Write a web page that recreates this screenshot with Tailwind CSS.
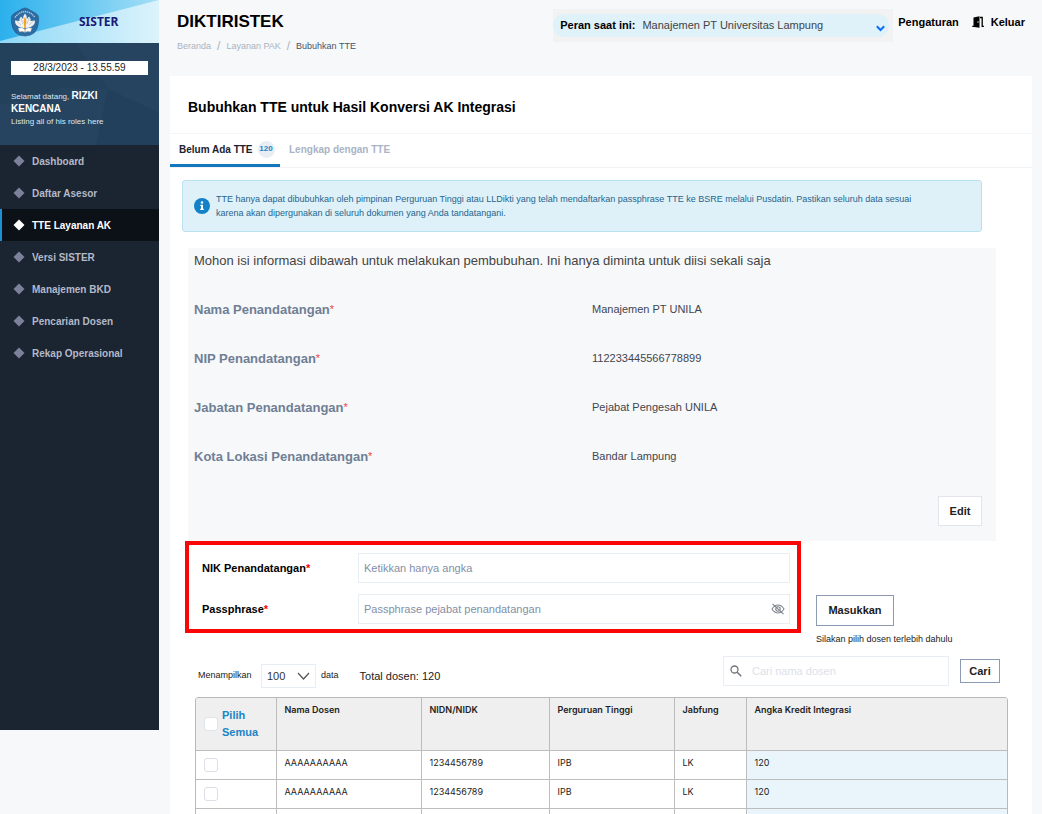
<!DOCTYPE html>
<html lang="id">
<head>
<meta charset="utf-8">
<title>SISTER - Bubuhkan TTE</title>
<script src="https://cdn.jsdelivr.net/npm/@tailwindcss/browser@4"></script>
</head>
<body class="bg-[#f7f8fa] font-['Liberation_Sans',Arial,sans-serif] text-black">
<div class="flex h-screen items-start overflow-hidden">

  <aside class="flex min-h-[730px] w-[159px] shrink-0 flex-col bg-[#1b2431]">
    <div class="relative flex h-[43px] items-center overflow-hidden bg-[#c4ebfa]">
      <svg class="absolute inset-0 h-full w-full" viewBox="0 0 159 43" preserveAspectRatio="none" aria-hidden="true">
        <defs>
          <linearGradient id="sky" x1="0" y1="0" x2="1" y2="0"><stop offset="0" stop-color="#2bb0ec"/><stop offset="1" stop-color="#a5dff7"/></linearGradient>
          <linearGradient id="haze" x1="0" y1="0" x2="1" y2="0"><stop offset="0" stop-color="#8ed8f6"/><stop offset="1" stop-color="#dcf3fc"/></linearGradient>
        </defs>
        <rect width="159" height="43" fill="url(#haze)"/>
        <path d="M0 0H159L0 41Z" fill="url(#sky)"/>
      </svg>
      <svg class="relative ml-[10px] h-[30px] w-[30px]" viewBox="0 0 30 30" role="img" aria-label="Tut Wuri Handayani">
        <path d="M15 1Q17 1 19 2.5L26 6.500Q28.500 8 28.600 10.500L28.500 15Q28 22 24 26Q20 29 15 29Q10 29 6 26Q2 22 1.500 15L1.400 10.500Q1.500 8 4 6.500L11 2.500Q13 1 15 1Z" fill="#2d6da3" stroke="#1f5486" stroke-width=".6"/>
        <path d="M5 10.500Q9 5 15 4.500Q21 5 25 10.500" fill="none" stroke="#b9d3e6" stroke-width="1.300" stroke-dasharray="1.300 .7"/>
        <path d="M15 6.500Q17.500 9 16.800 12L19 9.500Q21 11.500 20.500 14L25 13.500Q25 18 21.500 19.500L18.500 21H11.500L8.500 19.500Q5 18 5 13.500L9.500 14Q9 11.500 11 9.500L13.200 12Q12.500 9 15 6.500Z" fill="#f3f1ee"/>
        <path d="M7 14.500L11 18M23 14.500L19 18M11 11L13 17M19 11L17 17" stroke="#9db7cb" stroke-width=".6"/>
        <path d="M15 10Q17 13 16 17.500L15.800 21H14.200L14 17.500Q13 13 15 10Z" fill="#f2a52a"/>
        <path d="M8 21Q12 20 15 22Q18 20 22 21L20.500 25Q17.500 24 15 25.500Q12.500 24 9.500 25Z" fill="#fff" stroke="#6a8aa5" stroke-width=".5"/>
        <path d="M15 22V25.500" stroke="#b57738" stroke-width=".8"/>
      </svg>
      <div class="relative ml-[39px] font-['Noto_Sans',sans-serif] text-xs font-bold text-[#1a1a78]">SISTER</div>
    </div>

    <div class="relative h-[102px] overflow-hidden bg-[#24415c] px-[11px] pt-[18px] text-white">
      <svg class="absolute inset-0 h-full w-full" viewBox="0 0 159 102" preserveAspectRatio="none" aria-hidden="true">
        <path d="M76 0H159V70L108 46Z" fill="#284662" opacity=".6"/>
        <path d="M0 62L60 45L108 46L96 102H0Z" fill="#284762" opacity=".5"/>
        <path d="M108 46L159 70V102H96Z" fill="#223f5a" opacity=".6"/>
      </svg>
      <div class="relative">
        <time class="block h-[14px] bg-white text-center text-[10px] leading-[14px] text-[#222]">28/3/2023 - 13.55.59</time>
        <p class="mt-[15px] text-[8px] leading-[12px] text-[#dfe6ec]">Selamat datang, <b class="text-[10px] text-white">RIZKI KENCANA</b></p>
        <p class="text-[8px] leading-[11px] text-[#dfe6ec]">Listing all of his roles here</p>
      </div>
    </div>

    <nav class="flex flex-col text-[10px] font-bold text-[#b3b9c8]">
      <a href="#" class="flex h-8 items-center gap-[7px] border-l-2 border-transparent pl-[11px]"><svg class="h-3 w-3 fill-[#7d8199]" viewBox="0 0 12 12" aria-hidden="true"><path d="M6 .5L11.500 6L6 11.500L.5 6Z"/></svg>Dashboard</a>
      <a href="#" class="flex h-8 items-center gap-[7px] border-l-2 border-transparent pl-[11px]"><svg class="h-3 w-3 fill-[#7d8199]" viewBox="0 0 12 12" aria-hidden="true"><path d="M6 .5L11.500 6L6 11.500L.5 6Z"/></svg>Daftar Asesor</a>
      <a href="#" class="flex h-8 items-center gap-[7px] border-l-2 border-[#1c8fd6] bg-[#0c1017] pl-[11px] text-white"><svg class="h-3 w-3 fill-white" viewBox="0 0 12 12" aria-hidden="true"><path d="M6 .5L11.500 6L6 11.500L.5 6Z"/></svg>TTE Layanan AK</a>
      <a href="#" class="flex h-8 items-center gap-[7px] border-l-2 border-transparent pl-[11px]"><svg class="h-3 w-3 fill-[#7d8199]" viewBox="0 0 12 12" aria-hidden="true"><path d="M6 .5L11.500 6L6 11.500L.5 6Z"/></svg>Versi SISTER</a>
      <a href="#" class="flex h-8 items-center gap-[7px] border-l-2 border-transparent pl-[11px]"><svg class="h-3 w-3 fill-[#7d8199]" viewBox="0 0 12 12" aria-hidden="true"><path d="M6 .5L11.500 6L6 11.500L.5 6Z"/></svg>Manajemen BKD</a>
      <a href="#" class="flex h-8 items-center gap-[7px] border-l-2 border-transparent pl-[11px]"><svg class="h-3 w-3 fill-[#7d8199]" viewBox="0 0 12 12" aria-hidden="true"><path d="M6 .5L11.500 6L6 11.500L.5 6Z"/></svg>Pencarian Dosen</a>
      <a href="#" class="flex h-8 items-center gap-[7px] border-l-2 border-transparent pl-[11px]"><svg class="h-3 w-3 fill-[#7d8199]" viewBox="0 0 12 12" aria-hidden="true"><path d="M6 .5L11.500 6L6 11.500L.5 6Z"/></svg>Rekap Operasional</a>
    </nav>
  </aside>

  <main class="min-w-0 flex-1 pr-[10px] pl-[11px]">
    <header class="flex h-[76px] items-start pr-[7px] pl-[7px]">
      <div class="flex-1 pt-3">
        <div class="text-[17px] leading-5 font-bold">DIKTIRISTEK</div>
        <nav aria-label="Breadcrumb" class="mt-2 flex items-center gap-[6px] text-[9px] leading-3 text-[#a9b3c2]">
          <a href="#">Beranda</a><span class="text-xs leading-3">/</span><a href="#">Layanan PAK</a><span class="text-xs leading-3">/</span><a href="#" class="text-[#44546a]">Bubuhkan TTE</a>
        </nav>
      </div>
      <div class="mt-[9px] w-[340px] bg-[#f2f2f2] pt-[5px] pr-1 pb-[5px]">
        <div class="relative flex h-[23px] items-center rounded-full bg-[#dff1f9] pl-[7px]">
          <label for="peran" class="shrink-0 text-[11px] font-bold">Peran saat ini:</label>
          <select id="peran" class="ml-[7px] h-full flex-1 appearance-none bg-transparent text-[11px] text-[#444]"><option>Manajemen PT Universitas Lampung</option></select>
          <svg class="pointer-events-none absolute top-[11px] right-1 h-[7px] w-[9px]" viewBox="0 0 9 7" aria-hidden="true"><path d="M.8 1.200L4.500 5L8.200 1.200" fill="none" stroke="#0d6efd" stroke-width="2"/></svg>
        </div>
      </div>
      <a href="#" class="mt-[15px] ml-[5px] text-[11px] leading-[14px] font-bold">Pengaturan</a>
      <a href="#" class="mt-[15px] ml-[13px] flex items-center gap-[7px] text-[11px] leading-[14px] font-bold">
        <svg class="h-3 w-3" viewBox="0 0 12 12" aria-hidden="true"><path d="M1.500 1.500L7.500 .3V11.700L2 11H.3V9.800H1.500Z"/><path d="M8 1.500H10.200V10.300H11.900" fill="none" stroke="#000" stroke-width="1.300"/><circle cx="6" cy="6" r=".7" fill="#fff"/></svg>
        Keluar
      </a>
    </header>

    <section class="bg-white">
      <h1 class="flex h-[58px] items-center border-b border-[#f3f5f8] pt-1 pl-[18px] text-sm font-bold">Bubuhkan TTE untuk Hasil Konversi AK Integrasi</h1>
      <div class="flex h-[34px] items-stretch border-b border-[#f0f2f5] text-[10px] font-bold" role="tablist">
        <button role="tab" aria-selected="true" class="flex w-[110px] items-center border-b-3 border-[#1277bd] pl-[9px] text-[#1a2230]">Belum Ada TTE<span class="ml-[5px] flex h-[17px] w-[17px] items-center justify-center rounded-full bg-[#e9eef5] text-[8px] text-[#1c84c6]">120</span></button>
        <button role="tab" aria-selected="false" class="pb-[3px] pl-[9px] text-[#a9b3c5]">Lengkap dengan TTE</button>
      </div>

      <div class="mt-3 mr-[50px] ml-3 flex h-[52px] items-center gap-[6px] rounded-[3px] border border-[#b9e1f0] bg-[#dff1f8] pr-9 pl-[11px] text-[#25658f]">
        <svg class="h-4 w-4 shrink-0" viewBox="0 0 16 16" aria-hidden="true"><circle cx="8" cy="8" r="8" fill="#1381c7"/><circle cx="8" cy="4.500" r="1.200" fill="#fff"/><path d="M6.300 6.800H9V10.800H9.800V12H6.200V10.800H7V8H6.300Z" fill="#fff"/></svg>
        <p class="text-[9px] leading-[14px]">TTE hanya dapat dibubuhkan oleh pimpinan Perguruan Tinggi atau LLDikti yang telah mendaftarkan passphrase TTE ke BSRE melalui Pusdatin. Pastikan seluruh data sesuai<br>karena akan dipergunakan di seluruh dokumen yang Anda tandatangani.</p>
      </div>

      <div class="mt-4 mr-9 ml-[18px] bg-[#f7f8fa] px-[6px] pt-1 pb-[15px]">
        <p class="text-[13px] leading-[17px] text-[#444]">Mohon isi informasi dibawah untuk melakukan pembubuhan. Ini hanya diminta untuk diisi sekali saja</p>
        <dl class="mt-4 grid grid-cols-2 text-[#3f4650] *:flex *:h-[49px] *:items-center">
          <dt class="text-[13px] font-bold text-[#6f7f95]">Nama Penandatangan<span class="text-[11px] font-normal text-[#ee4444]">*</span></dt><dd class="text-[11px]">Manajemen PT UNILA</dd>
          <dt class="text-[13px] font-bold text-[#6f7f95]">NIP Penandatangan<span class="text-[11px] font-normal text-[#ee4444]">*</span></dt><dd class="text-[11px]">112233445566778899</dd>
          <dt class="text-[13px] font-bold text-[#6f7f95]">Jabatan Penandatangan<span class="text-[11px] font-normal text-[#ee4444]">*</span></dt><dd class="text-[11px]">Pejabat Pengesah UNILA</dd>
          <dt class="text-[13px] font-bold text-[#6f7f95]">Kota Lokasi Penandatangan<span class="text-[11px] font-normal text-[#ee4444]">*</span></dt><dd class="text-[11px]">Bandar Lampung</dd>
        </dl>
        <div class="mt-[15px] flex justify-end pr-2"><button class="h-[30px] w-11 border border-[#e2e6ec] bg-white text-[11px] font-bold text-[#222]">Edit</button></div>
      </div>

      <form class="ml-[15px] flex items-start gap-[15px]">
        <div class="flex flex-1 flex-col gap-[11px] border-4 border-[#f90606] pt-2 pr-[7px] pb-[5px] pl-[13px]">
          <div class="flex items-center">
            <label for="nik" class="w-[156px] text-[11px] font-bold">NIK Penandatangan<span class="text-[#f00]">*</span></label>
            <input id="nik" type="text" placeholder="Ketikkan hanya angka" class="h-[30px] min-w-0 flex-1 border border-[#e9eef5] px-[5px] text-[11px] placeholder:text-[#8290a8]">
          </div>
          <div class="flex items-center">
            <label for="pass" class="w-[156px] text-[11px] font-bold">Passphrase<span class="text-[#f00]">*</span></label>
            <div class="relative flex flex-1">
              <input id="pass" type="password" placeholder="Passphrase pejabat penandatangan" class="h-[30px] min-w-0 flex-1 border border-[#e9eef5] px-[5px] text-[11px] placeholder:text-[#8290a8]">
              <button type="button" aria-label="Tampilkan passphrase" class="absolute top-[9px] right-[5px]"><svg class="h-3 w-[14px]" viewBox="0 0 14 12" fill="none" stroke="#7d828b" stroke-width="1.100"><path d="M1 6Q3.500 2 7 2Q10.500 2 13 6Q10.500 10 7 10Q3.500 10 1 6Z"/><circle cx="7" cy="6" r="2.200"/><path d="M1.500 .8L12.500 11.200"/></svg></button>
            </div>
          </div>
        </div>
        <div class="flex w-[216px] flex-col items-start pt-[54px]">
          <button type="button" class="h-[31px] w-[78px] border border-[#8c9bb3] bg-white text-[11px] font-bold text-[#1a1a1a]">Masukkan</button>
          <p class="mt-[7px] text-[9px] leading-3 text-[#222]">Silakan pilih dosen terlebih dahulu</p>
        </div>
      </form>

      <div class="mt-[11px] mr-8 ml-7 flex h-[30px] items-center">
        <div class="flex flex-1 items-center pt-[10px]">
          <label for="jumlah" class="w-[63px] text-[9px] text-[#222]">Menampilkan</label>
          <div class="relative">
            <select id="jumlah" class="block h-6 w-[55px] appearance-none border border-[#e6edf5] bg-white pl-[5px] text-[11px] text-[#333]"><option>100</option></select>
            <svg class="pointer-events-none absolute top-2 right-[6px] h-2 w-[13px]" viewBox="0 0 13 8" aria-hidden="true"><path d="M1 1L6.500 7L12 1" fill="none" stroke="#555" stroke-width="1.200"/></svg>
          </div>
          <span class="ml-[5px] text-[9px] text-[#222]">data</span>
          <span class="ml-[21px] text-[11px] text-[#222]">Total dosen: 120</span>
        </div>
        <div class="flex items-center gap-[11px]">
          <div class="relative">
            <svg class="absolute top-[9px] left-[7px] h-3 w-3" viewBox="0 0 12 12" fill="none" stroke="#70757d" aria-hidden="true"><circle cx="4.500" cy="4.500" r="3.500" stroke-width="1.300"/><path d="M7.200 7.200L11.200 11.200" stroke-width="1.500"/></svg>
            <input type="search" aria-label="Cari nama dosen" placeholder="Cari nama dosen" class="block h-[30px] w-[226px] border border-[#e9eef5] pr-2 pl-7 text-[11px] placeholder:text-[#dbe1ea]">
          </div>
          <button class="h-6 w-10 border border-[#8c9bb3] bg-white text-[11px] font-bold text-[#222]">Cari</button>
        </div>
      </div>

      <div class="mt-[11px] mr-6 ml-[25px] overflow-hidden rounded-t-[3px] border border-[#b9b9b9]">
        <table class="w-full table-fixed border-collapse text-left font-['Inter',sans-serif] text-[9px] text-[#222] [&_td]:border-[#bdbdbd] [&_td]:px-2 [&_td:not(:first-child)]:border-l [&_th]:border-[#bdbdbd] [&_th:not(:first-child)]:border-l">
          <colgroup><col class="w-[80px]"><col class="w-[145px]"><col class="w-[128px]"><col class="w-[125px]"><col class="w-[72px]"><col></colgroup>
          <thead>
            <tr class="h-[52px] bg-[#efefef] align-top *:border-b *:px-2 *:pt-[5px] *:font-semibold">
              <th scope="col"><label class="flex items-center gap-1 pt-1 font-['Liberation_Sans',Arial,sans-serif] text-[11px] leading-[17px] font-bold text-[#1c84c6]"><input type="checkbox" class="h-[14px] w-[14px] shrink-0 appearance-none rounded-[3px] border border-[#dfe3ea] bg-white">Pilih Semua</label></th>
              <th scope="col">Nama Dosen</th><th scope="col">NIDN/NIDK</th><th scope="col">Perguruan Tinggi</th><th scope="col">Jabfung</th><th scope="col">Angka Kredit Integrasi</th>
            </tr>
          </thead>
          <tbody>
            <tr class="h-[29px] *:border-b"><td><input type="checkbox" aria-label="Pilih dosen 1" class="block h-[14px] w-[14px] appearance-none rounded-[3px] border border-[#dcdfe8] bg-white"></td><td class="pb-[3px]">AAAAAAAAAA</td><td class="pb-[3px]">1234456789</td><td class="pb-[3px]">IPB</td><td class="pb-[3px]">LK</td><td class="bg-[#e9f5fb] pb-[3px]">120</td></tr>
            <tr class="h-[29px] *:border-b"><td><input type="checkbox" aria-label="Pilih dosen 2" class="block h-[14px] w-[14px] appearance-none rounded-[3px] border border-[#dcdfe8] bg-white"></td><td class="pb-[3px]">AAAAAAAAAA</td><td class="pb-[3px]">1234456789</td><td class="pb-[3px]">IPB</td><td class="pb-[3px]">LK</td><td class="bg-[#e9f5fb] pb-[3px]">120</td></tr>
            <tr class="h-[29px] *:border-b"><td></td><td></td><td></td><td></td><td></td><td class="bg-[#e9f5fb]"></td></tr>
          </tbody>
        </table>
      </div>
    </section>
  </main>
</div>
</body>
</html>
